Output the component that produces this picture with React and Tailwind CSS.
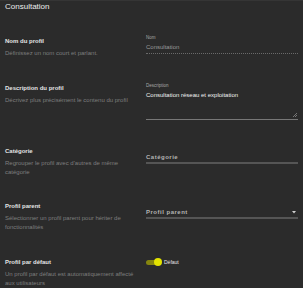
import React from "react";

function Row({ h, children }) {
  return <div className={`flex ${h}`}>{children}</div>;
}

function Left({ pt, title, lines }) {
  return (
    <div className={`w-[146px] pl-[5px] ${pt}`}>
      <div className="text-[6px] leading-[10px] font-bold text-[#e4e4e4]">{title}</div>
      <div className="mt-[3px] text-[6px] leading-[9px] text-[#7e7e7e]">
        {lines.map((l, i) => (
          <div key={i}>{l}</div>
        ))}
      </div>
    </div>
  );
}

export default function App() {
  return (
    <div className="w-[303px] h-[288px] overflow-hidden bg-[#2b2b2b] font-['Liberation_Sans',Arial,sans-serif] border-t border-[#353535]">
      <div className="pl-[5px] h-[29px] text-[8px] leading-[12px] text-[#ececec]">Consultation</div>

      {/* Row 1 */}
      <Row h="h-[50px]">
        <Left pt="pt-[6px]" title="Nom du profil" lines={["Définissez un nom court et parlant."]} />
        <div className="flex-1 pr-[5px] pt-[4px]">
          <div className="text-[4.5px] leading-[7px] text-[#a8a8a8]">Nom</div>
          <div className="mt-[2px] pb-[2px] border-b border-dotted border-[#6a6a6a] text-[6px] leading-[8px] text-[#9a9a9a]">
            Consultation
          </div>
        </div>
      </Row>

      {/* Row 2 */}
      <Row h="h-[60px]">
        <Left pt="pt-[3px]" title="Description du profil" lines={["Décrivez plus précisément le contenu du profil"]} />
        <div className="flex-1 pr-[5px] pt-[2px]">
          <div className="text-[4.5px] leading-[7px] text-[#a8a8a8]">Description</div>
          <div className="relative mt-[2px] h-[29px] border-b border-[#777777] text-[6px] leading-[8px] text-[#f2f2f2]">
            Consultation réseau et exploitation
            <svg className="absolute right-[1px] bottom-[2px]" width="4" height="4" viewBox="0 0 4 4">
              <path d="M4 0 L0 4 M4 2 L2 4" stroke="#8a8a8a" strokeWidth="0.8" />
            </svg>
          </div>
        </div>
      </Row>

      {/* Row 3 */}
      <Row h="h-[56px]">
        <Left pt="pt-[6px]" title="Catégorie" lines={["Regrouper le profil avec d'autres de même", "catégorie"]} />
        <div className="flex-1 pr-[5px] pt-[13px]">
          <div className="pb-[1px] border-b-2 border-[#555555] text-[6px] leading-[8px] tracking-[0.5px] font-bold text-[#b4b4b4]">
            Catégorie
          </div>
        </div>
      </Row>

      {/* Row 4 */}
      <Row h="h-[56px]">
        <Left
          pt="pt-[5px]"
          title="Profil parent"
          lines={["Sélectionner un profil parent pour hériter de", "fonctionnalités"]}
        />
        <div className="flex-1 pr-[5px] pt-[12px]">
          <div className="flex items-center justify-between pb-[1px] border-b-2 border-[#555555] text-[6px] leading-[8px] tracking-[0.5px] font-bold text-[#b4b4b4]">
            <span>Profil parent</span>
            <svg className="mr-[2px]" width="4" height="3" viewBox="0 0 4 3">
              <path d="M0 0 L4 0 L2 2.5 Z" fill="#d0d0d0" />
            </svg>
          </div>
        </div>
      </Row>

      {/* Row 5 */}
      <Row h="h-[36px]">
        <Left
          pt="pt-[5px]"
          title="Profil par défaut"
          lines={["Un profil par défaut est automatiquement affecté", "aux utilisateurs"]}
        />
        <div className="flex-1 pr-[5px] pt-[6px]">
          <div className="flex items-center">
            <div className="relative w-[16px] h-[8px] flex items-center">
              <div className="w-[14px] h-[5px] rounded-full bg-[#86860f]" />
              <div className="absolute right-0 top-0 w-[8px] h-[8px] rounded-full bg-[#e3e300]" />
            </div>
            <span className="ml-[2px] text-[5px] leading-[8px] text-[#e8e8e8]">Défaut</span>
          </div>
        </div>
      </Row>
    </div>
  );
}
